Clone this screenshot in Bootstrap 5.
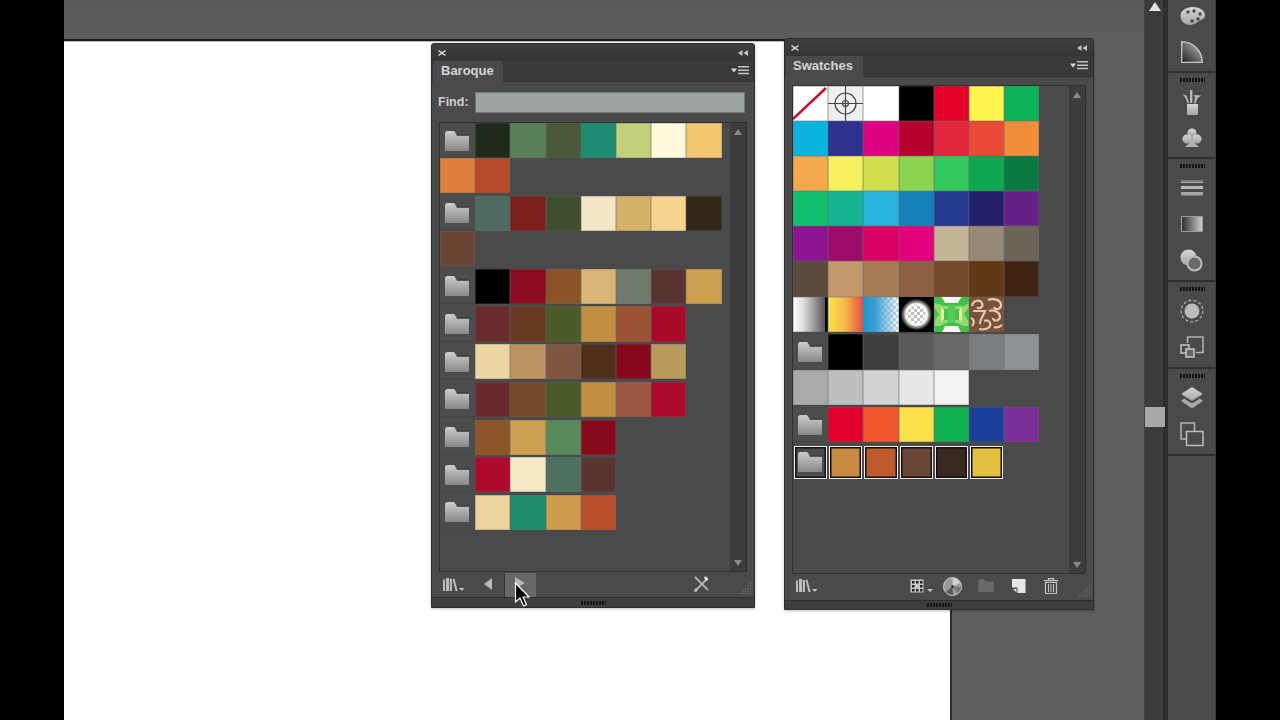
<!DOCTYPE html>
<html lang="en">
<head>
<meta charset="utf-8">
<title>Swatches</title>
<link href="https://cdn.jsdelivr.net/npm/bootstrap@5.3.0/dist/css/bootstrap.min.css" rel="stylesheet">
<style>
html,body{margin:0;height:720px;overflow:hidden;background:#000;font-family:"Liberation Sans",Arial,sans-serif}
.stage{width:1280px;height:720px;background:#000}
.side{width:64px;background:#000}
.work{width:1080px;background:#5e5e5e}
.work-top{height:39px;background:linear-gradient(#5a5a5a,#5e5e5e)}
.canvas-row{height:681px}
.art{width:888px;background:#fff;border-top:2px solid #1c1c1c;border-right:2px solid #2c2c2c;box-shadow:inset 0 1px 0 #bbb}
.vscroll{width:19px;background:#3b3b3b;border-left:1px solid #444}
.vscroll-up{width:0;height:0;border-left:6px solid transparent;border-right:6px solid transparent;border-bottom:9px solid #e4e4e4;margin:2px 0 0 4px}
.vthumb{height:20px;width:20px;background:#a8a8a8;top:407px;left:0}
.vgap{width:5px;background:#2e2e2e}
.dock{width:48px;background:#4a4a4a;border-right:1px solid #3c3c3c}
.dgroup{border-bottom:2px solid #2f2f2f;padding-top:11px}
.dgroup.first{height:73px;padding-top:0}
.dgroup.g2{height:86px}
.dgroup.g3{height:123px}
.dgroup.g4{height:87px}
.grip{height:4px;width:25px;background:repeating-linear-gradient(90deg,#141414 0 2px,transparent 2px 3px)}
.dgroup .grip{position:absolute;top:5px;left:12px}
.dicon{height:36px}
.dicon.shift{margin-top:-2px}
.panel{position:absolute;background:#4a4a4a;border:1px solid #2e2e2e;border-radius:3px 3px 0 0;color:#d2d2d2;box-shadow:0 1px 3px rgba(0,0,0,.25)}
.panel-a{left:431px;top:43px;width:324px;height:565px}
.panel-b{left:784px;top:38px;width:310px;height:572px}
.ptitle{height:17px;background:linear-gradient(#3f3f3f,#353535);padding:0 6px}
.ptabs{height:21px;background:#3a3a3a;border-bottom:1px solid #333}
.ptab{height:21px;background:#4a4a4a;margin-left:1px;font-weight:700;font-size:13px;color:#d4d4d4;line-height:20px}
.panel-a .ptab{width:70px;padding-left:8px}
.panel-b .ptab{width:77px;padding-left:7px}
.menuic{margin-right:5.5px}
.findrow{height:40px;padding:10px 9px 0 6px}
.findlabel{width:37px;font-size:12.5px;font-weight:700;color:#cfcfcf;line-height:20px}
.findbox{flex:1;height:21px;background:#9fa5a0;border:1px solid #777}
.listbox{border:1px solid #2f2f2f;background:#4a4a4a}
.panel-a .listbox{margin:0 7px 0 7px;height:450px}
.panel-b .listbox{margin:7.5px 7px 0 7px;height:489.5px}
.track{width:16px;background:#3d3d3d}
.tri-up,.tri-down{width:0;height:0;border-left:4.5px solid transparent;border-right:4.5px solid transparent}
.tri-up{border-bottom:6px solid #8a8a8a;margin-top:6px}
.tri-down{border-top:6px solid #8a8a8a;margin-bottom:5px}
.swgroup{margin-bottom:2.5px}
.panel-a .swgroup{width:282px}
.panel-b .swgroup{width:247px}
.chip{width:35.2px;height:35.2px;flex:none;box-shadow:inset 0 0 0 .6px rgba(105,105,105,.55)}
.folder{width:35.2px;height:35.2px;flex:none;background:#4c4c4c;border-bottom:1px solid #444;display:flex;align-items:center;justify-content:center;padding:1px 1.5px 0 0}
.picked{margin:0;box-shadow:inset 0 0 0 1px #eee,inset 0 0 0 2.5px #111;border:.7px solid #4a4a4a}
.picked.folder{padding:0 1.5px 0 0}
.pfoot{height:25px}
.panel-b .pfoot{height:26px}
.pfoot .spot{position:absolute}
.hilite{left:72px;top:1px;width:32px;height:24px;background:#676767;border-left:1px solid #333}
.pbase{height:10px;background:#3e3e3e;border-top:1px solid #2e2e2e}
.panel-b .pbase{height:9px}
.grad-metal{background:linear-gradient(90deg,#fff 0,#ddd 30%,#555 92%,#000 93%)}
.grad-fire{background:linear-gradient(90deg,#fbe54a 0,#f7b64a 50%,#e8503c 100%)}
.checks{background-color:#fff;background-image:linear-gradient(45deg,#c9d6de 25%,transparent 25%,transparent 75%,#c9d6de 75%),linear-gradient(45deg,#c9d6de 25%,transparent 25%,transparent 75%,#c9d6de 75%);background-size:6px 6px;background-position:0 0,3px 3px}
.checks.gray{background-image:linear-gradient(45deg,#bbb 25%,transparent 25%,transparent 75%,#bbb 75%),linear-gradient(45deg,#bbb 25%,transparent 25%,transparent 75%,#bbb 75%)}
.fade-blue{position:absolute;inset:0;background:linear-gradient(90deg,#1f96d0 0,#3aa0d4 35%,rgba(80,170,220,0) 100%)}
.halo{position:absolute;inset:0;background:radial-gradient(circle at center,rgba(255,255,255,0) 0,rgba(255,255,255,.15) 32%,rgba(255,255,255,.9) 43%,rgba(120,120,120,.9) 52%,#000 64%)}
.cursor{position:absolute;left:514px;top:582px}
.defs-holder{position:absolute;width:0;height:0}
</style>
</head>
<body>
<svg class="defs-holder" aria-hidden="true"><defs>
<linearGradient id="gf" x1="0" y1="0" x2="0" y2="1"><stop offset="0" stop-color="#cdcdcd"/><stop offset="1" stop-color="#878787"/></linearGradient>
<linearGradient id="gi" x1="0" y1="0" x2="0" y2="1"><stop offset="0" stop-color="#d6d6d6"/><stop offset="1" stop-color="#a4a4a4"/></linearGradient>
<linearGradient id="gs" x1="1" y1="0" x2="0" y2="1"><stop offset="0" stop-color="#c0c0c0"/><stop offset="1" stop-color="#1e1e1e"/></linearGradient>
<linearGradient id="gb" x1="0" y1="0" x2="1" y2="0"><stop offset="0" stop-color="#2c2c2c"/><stop offset="1" stop-color="#d2d2d2"/></linearGradient>
<symbol id="fold" viewBox="0 0 24 20"><path d="M0 2.500Q0 0 2.500 0H9l3 4h12v16H0z" fill="url(#gf)"/><path d="M11 3.400h13v1.400H12z" fill="#333"/></symbol>
<symbol id="lib" viewBox="0 0 22 14"><path d="M0 1.500h2v11.500H0zM3 0h3.200v13H3zM7 1h2v12H7zM9.600 1l1.800-.6L14.700 13h-2.200z" fill="#bdbdbd"/><path d="M16 10h5.500l-2.700 2.800z" fill="#c8c8c8"/></symbol>
<symbol id="menuic" viewBox="0 0 18 10"><path d="M0 2.500h6L3 6.500z" fill="#d8d8d8"/><path d="M7 0h11v1.500H7zM7 3.400h11v1.500H7zM7 6.800h11v1.500H7z" fill="#c4c4c4"/></symbol>
<symbol id="closeic" viewBox="0 0 8 6"><path d="M.8 0 4 2 7.200 0l.8.9L5.200 3 8 5.100l-.8.900L4 4 .8 6 0 5.100 2.800 3 0 .9z" fill="#d4d4d4"/></symbol>
<symbol id="collic" viewBox="0 0 10 6"><path d="M4.500 0v6L0 3zM10 0v6L5.500 3z" fill="#c4c4c4"/></symbol>
<symbol id="dots" viewBox="0 0 12 12"><g fill="#6e6e6e"><rect x="10" y="0" width="1.200" height="1.200"/><rect x="7.500" y="2.500" width="1.200" height="1.200"/><rect x="10" y="2.500" width="1.200" height="1.200"/><rect x="5" y="5" width="1.200" height="1.200"/><rect x="7.500" y="5" width="1.200" height="1.200"/><rect x="10" y="5" width="1.200" height="1.200"/><rect x="2.500" y="7.500" width="1.200" height="1.200"/><rect x="5" y="7.500" width="1.200" height="1.200"/><rect x="7.500" y="7.500" width="1.200" height="1.200"/><rect x="10" y="7.500" width="1.200" height="1.200"/><rect x="0" y="10" width="1.200" height="1.200"/><rect x="2.500" y="10" width="1.200" height="1.200"/><rect x="5" y="10" width="1.200" height="1.200"/><rect x="7.500" y="10" width="1.200" height="1.200"/><rect x="10" y="10" width="1.200" height="1.200"/></g></symbol>
</defs></svg>

<div class="stage d-flex position-relative">
  <div class="side"></div>
  <div class="work d-flex flex-column">
    <div class="work-top"></div>
    <div class="canvas-row d-flex"><div class="art"></div></div>
  </div>
  <div class="vscroll position-relative"><div class="vscroll-up"></div><div class="vthumb position-absolute"></div></div>
  <div class="vgap"></div>
  <div class="dock d-flex flex-column">
    <div class="dgroup first position-relative">
      <div class="dicon shift d-flex align-items-center justify-content-center"><svg width="26" height="18" viewBox="0 0 26 18"><path fill-rule="evenodd" d="M2 6C4 2 9 0 14 0c6 0 12 3 12 8 0 3-2 4-4 5-3 1-6 5-11 5C5 18 0 13 2 6z" fill="url(#gi)"/><g fill="#4a4a4a"><circle cx="9" cy="5" r="1.700"/><circle cx="15" cy="4" r="1.700"/><circle cx="21" cy="7" r="1.700"/><circle cx="19" cy="12" r="1.700"/><circle cx="13" cy="14" r="1.700"/></g></svg></div>
      <div class="dicon d-flex align-items-center justify-content-center"><svg width="22" height="22" viewBox="0 0 22 22"><path d="M.7.7C12 .7 21.300 10 21.300 21.300H.7z" fill="url(#gs)" stroke="#c8c8c8" stroke-width="1.300"/></svg></div>
    </div>
    <div class="dgroup g2 position-relative">
      <div class="grip"></div>
      <div class="dicon d-flex align-items-center justify-content-center"><svg width="20" height="26" viewBox="0 0 20 26"><path d="M5 15h11v11H5z" fill="url(#gi)"/><path d="M8 14V1h2.400v13zM5.600 14.500 3.500 9 .5 5l4 1.500 2.600 7.500zM12 14.500l1-6L11.500 6l8 .5-4 2.500-2 5.500z" fill="#b8b8b8"/></svg></div>
      <div class="dicon d-flex align-items-center justify-content-center"><svg width="20" height="20" viewBox="0 0 20 20"><g fill="url(#gi)"><circle cx="10" cy="5" r="4.600"/><circle cx="5" cy="11" r="4.600"/><circle cx="15" cy="11" r="4.600"/></g><path d="M8.800 9h2.400c0 4 1.500 7 4.300 8.500l1.500 1.500H3l1.500-1.500C7.300 16 8.800 13 8.800 9z" fill="#b0b0b0"/></svg></div>
    </div>
    <div class="dgroup g3 position-relative">
      <div class="grip"></div>
      <div class="dicon d-flex align-items-center justify-content-center"><svg width="22" height="16" viewBox="0 0 22 16"><path d="M0 0h22v1.600H0z" fill="#7a7a7a"/><path d="M0 1.600h22v1.400H0z" fill="#a8a8a8"/><path d="M0 6h22v3H0z" fill="#b8b8b8"/><path d="M0 12h22v3.500H0z" fill="#a6a6a6"/></svg></div>
      <div class="dicon d-flex align-items-center justify-content-center"><svg width="22" height="16" viewBox="0 0 22 16"><rect x=".5" y=".5" width="21" height="15" fill="url(#gb)" stroke="#9a9a9a"/></svg></div>
      <div class="dicon d-flex align-items-center justify-content-center"><svg width="23" height="23" viewBox="0 0 23 23"><circle cx="8.500" cy="8.500" r="8" fill="url(#gi)"/><circle cx="14.500" cy="14.500" r="7" fill="#6a6a6a" stroke="#bdbdbd" stroke-width="2"/></svg></div>
    </div>
    <div class="dgroup g4 position-relative">
      <div class="grip"></div>
      <div class="dicon d-flex align-items-center justify-content-center"><svg width="24" height="24" viewBox="0 0 24 24"><circle cx="12" cy="12" r="7.500" fill="#bcbcbc"/><circle cx="12" cy="12" r="10.800" fill="none" stroke="#a8a8a8" stroke-width="1.300" stroke-dasharray="3.200 2"/></svg></div>
      <div class="dicon d-flex align-items-center justify-content-center"><svg width="24" height="22" viewBox="0 0 24 22"><path d="M7.500 7V1h15.500v15.500H16" fill="none" stroke="#b4b4b4" stroke-width="1.500"/><rect x="1" y="9" width="8" height="8" fill="none" stroke="#c8c8c8" stroke-width="1.500"/><rect x="6" y="13" width="8" height="8" fill="#666" stroke="#c8c8c8" stroke-width="1.500"/></svg></div>
    </div>
    <div class="dgroup g4 position-relative">
      <div class="grip"></div>
      <div class="dicon d-flex align-items-center justify-content-center"><svg width="22" height="22" viewBox="0 0 22 22"><path d="M11 0 22 7 11 14 0 7z" fill="url(#gi)"/><path d="M3 11.500 11 16.500 19 11.500 22 14 11 21.500 0 14z" fill="#a8a8a8"/></svg></div>
      <div class="dicon d-flex align-items-center justify-content-center"><svg width="24" height="25" viewBox="0 0 24 25"><path d="M6 17H1V1h13.500v8" fill="none" stroke="#b4b4b4" stroke-width="1.500"/><rect x="6.500" y="9.500" width="16.500" height="14" fill="none" stroke="#bcbcbc" stroke-width="1.500"/></svg></div>
    </div>
  </div>
  <div class="side flex-grow-1"></div>

  <!-- Baroque panel -->
  <div class="panel panel-a d-flex flex-column">
    <div class="ptitle d-flex align-items-center justify-content-between"><svg width="8" height="6"><use href="#closeic"/></svg><svg width="10" height="6"><use href="#collic"/></svg></div>
    <div class="ptabs d-flex justify-content-between">
      <div class="ptab">Baroque</div>
      <svg class="align-self-center menuic" width="18" height="10"><use href="#menuic"/></svg>
    </div>
    <div class="findrow d-flex align-items-start"><div class="findlabel">Find:</div><div class="findbox"></div></div>
    <div class="listbox d-flex">
      <div class="flex-grow-1 d-flex flex-column">
        <div class="swgroup d-flex flex-wrap">
          <div class="folder"><svg width="24" height="20"><use href="#fold"/></svg></div>
          <div class="chip" style="background:#1f2a1c"></div><div class="chip" style="background:#587f58"></div><div class="chip" style="background:#4a5a38"></div><div class="chip" style="background:#1f8a72"></div><div class="chip" style="background:#c3d07a"></div><div class="chip" style="background:#fdfbdc"></div><div class="chip" style="background:#f5c670"></div><div class="chip" style="background:#df7f3c"></div><div class="chip" style="background:#b84a2c"></div>
        </div>
        <div class="swgroup d-flex flex-wrap">
          <div class="folder"><svg width="24" height="20"><use href="#fold"/></svg></div>
          <div class="chip" style="background:#4f6b60"></div><div class="chip" style="background:#7d1f1c"></div><div class="chip" style="background:#3f4f30"></div><div class="chip" style="background:#f2e6c4"></div><div class="chip" style="background:#d4b26a"></div><div class="chip" style="background:#f4d48e"></div><div class="chip" style="background:#30261a"></div><div class="chip" style="background:#6a4534"></div>
        </div>
        <div class="swgroup d-flex flex-wrap">
          <div class="folder"><svg width="24" height="20"><use href="#fold"/></svg></div>
          <div class="chip" style="background:#000"></div><div class="chip" style="background:#8a0a20"></div><div class="chip" style="background:#8a5428"></div><div class="chip" style="background:#d9b678"></div><div class="chip" style="background:#707a6c"></div><div class="chip" style="background:#5a3430"></div><div class="chip" style="background:#cfa050"></div>
        </div>
        <div class="swgroup d-flex flex-wrap">
          <div class="folder"><svg width="24" height="20"><use href="#fold"/></svg></div>
          <div class="chip" style="background:#6a2a2e"></div><div class="chip" style="background:#653a20"></div><div class="chip" style="background:#4a5a28"></div><div class="chip" style="background:#c09040"></div><div class="chip" style="background:#9a5434"></div><div class="chip" style="background:#a80a28"></div>
        </div>
        <div class="swgroup d-flex flex-wrap">
          <div class="folder"><svg width="24" height="20"><use href="#fold"/></svg></div>
          <div class="chip" style="background:#ebd5a0"></div><div class="chip" style="background:#bc9462"></div><div class="chip" style="background:#7e5640"></div><div class="chip" style="background:#4e2e1a"></div><div class="chip" style="background:#86081c"></div><div class="chip" style="background:#b89a5c"></div>
        </div>
        <div class="swgroup d-flex flex-wrap">
          <div class="folder"><svg width="24" height="20"><use href="#fold"/></svg></div>
          <div class="chip" style="background:#682a2e"></div><div class="chip" style="background:#744a2a"></div><div class="chip" style="background:#4a5a28"></div><div class="chip" style="background:#c29040"></div><div class="chip" style="background:#9a5844"></div><div class="chip" style="background:#ac0a2c"></div>
        </div>
        <div class="swgroup d-flex flex-wrap">
          <div class="folder"><svg width="24" height="20"><use href="#fold"/></svg></div>
          <div class="chip" style="background:#8c5628"></div><div class="chip" style="background:#cfa050"></div><div class="chip" style="background:#588a5a"></div><div class="chip" style="background:#860a1c"></div>
        </div>
        <div class="swgroup d-flex flex-wrap">
          <div class="folder"><svg width="24" height="20"><use href="#fold"/></svg></div>
          <div class="chip" style="background:#ae0a2c"></div><div class="chip" style="background:#f5e8c4"></div><div class="chip" style="background:#4f6f60"></div><div class="chip" style="background:#5a3430"></div>
        </div>
        <div class="swgroup d-flex flex-wrap">
          <div class="folder"><svg width="24" height="20"><use href="#fold"/></svg></div>
          <div class="chip" style="background:#ecd29c"></div><div class="chip" style="background:#1f8a6c"></div><div class="chip" style="background:#cc9c4c"></div><div class="chip" style="background:#b84e2c"></div>
        </div>
      </div>
      <div class="track d-flex flex-column align-items-center justify-content-between"><div class="tri-up"></div><div class="tri-down"></div></div>
    </div>
    <div class="pfoot position-relative">
      <div class="spot hilite"></div>
      <svg class="spot" style="left:11px;top:6px" width="22" height="14"><use href="#lib"/></svg>
      <svg class="spot" style="left:52px;top:6px" width="9" height="12" viewBox="0 0 9 12"><path d="M8 0v12L0 6z" fill="#b8b8b8"/></svg>
      <svg class="spot" style="left:83px;top:5px" width="10" height="12" viewBox="0 0 10 12"><path d="M0 0v12l10-6z" fill="#b8b8b8"/></svg>
      <svg class="spot" style="left:262px;top:4px" width="15" height="16" viewBox="0 0 15 16"><path d="M1 1l13 13M13 3 2 14" stroke="#c4c4c4" stroke-width="1.700" fill="none"/><path d="M10 1.500a2 2 0 1 1 3.500 3l-2 .5z" fill="#dcdcdc"/><path d="M0 16l1-4 3 3z" fill="#c4c4c4"/></svg>
      <svg class="spot" style="left:308px;top:11px" width="12" height="12"><use href="#dots"/></svg>
    </div>
    <div class="pbase d-flex align-items-center justify-content-center"><div class="grip"></div></div>
  </div>

  <!-- Swatches panel -->
  <div class="panel panel-b d-flex flex-column">
    <div class="ptitle d-flex align-items-center justify-content-between"><svg width="8" height="6"><use href="#closeic"/></svg><svg width="10" height="6"><use href="#collic"/></svg></div>
    <div class="ptabs d-flex justify-content-between">
      <div class="ptab">Swatches</div>
      <svg class="align-self-center menuic" width="18" height="10"><use href="#menuic"/></svg>
    </div>
    <div class="listbox d-flex">
      <div class="flex-grow-1 d-flex flex-column">
        <div class="swgroup d-flex flex-wrap">
          <div class="chip bg-white"><svg width="35" height="35" viewBox="0 0 35 35" class="d-block"><path d="M0 33 33 2" stroke="#c8102e" stroke-width="2.500"/></svg></div>
          <div class="chip" style="background:#efefef"><svg width="35" height="35" viewBox="0 0 35 35" class="d-block"><g fill="none" stroke="#444" stroke-width="1.200"><circle cx="17.500" cy="17.500" r="10.500"/><circle cx="17.500" cy="17.500" r="3"/><path d="M0 17.500h35M17.500 0v35"/></g></svg></div>
          <div class="chip" style="background:#fff"></div><div class="chip" style="background:#000"></div><div class="chip" style="background:#e2002a"></div><div class="chip" style="background:#fcf44c"></div><div class="chip" style="background:#0cb358"></div>
          <div class="chip" style="background:#0cb4e0"></div><div class="chip" style="background:#2e3190"></div><div class="chip" style="background:#df0083"></div><div class="chip" style="background:#b8002e"></div><div class="chip" style="background:#e3263c"></div><div class="chip" style="background:#ea4a36"></div><div class="chip" style="background:#f28d3c"></div>
          <div class="chip" style="background:#f6a84e"></div><div class="chip" style="background:#f6f15c"></div><div class="chip" style="background:#d0e04e"></div><div class="chip" style="background:#8cd450"></div><div class="chip" style="background:#33c85c"></div><div class="chip" style="background:#0fa850"></div><div class="chip" style="background:#0a7a40"></div>
          <div class="chip" style="background:#10c06c"></div><div class="chip" style="background:#14b494"></div><div class="chip" style="background:#24b4dc"></div><div class="chip" style="background:#1480b8"></div><div class="chip" style="background:#263a90"></div><div class="chip" style="background:#221e68"></div><div class="chip" style="background:#682088"></div>
          <div class="chip" style="background:#8c1490"></div><div class="chip" style="background:#9c0c68"></div><div class="chip" style="background:#dc0064"></div><div class="chip" style="background:#e4007c"></div><div class="chip" style="background:#c4b498"></div><div class="chip" style="background:#988878"></div><div class="chip" style="background:#6c6456"></div>
          <div class="chip" style="background:#5a4a3c"></div><div class="chip" style="background:#c49a6c"></div><div class="chip" style="background:#a87c54"></div><div class="chip" style="background:#8c6040"></div><div class="chip" style="background:#744a2c"></div><div class="chip" style="background:#603a14"></div><div class="chip" style="background:#402414"></div>
          <div class="chip grad-metal"></div><div class="chip grad-fire"></div>
          <div class="chip checks position-relative"><div class="fade-blue"></div></div>
          <div class="chip checks gray position-relative"><div class="halo"></div></div>
          <div class="chip" style="background:#8fdc6c"><svg width="35" height="35" viewBox="0 0 35 35" class="d-block"><path d="M0 0h6l6 5 11 0 6-5h6v6l-5 3-19 0L0 6z" fill="#3fbf4c"/><path d="M8 0h19l-3 6H11zM8 35h19l-3-6H11z" fill="#f6f9ec"/><path d="M10 12h15v11H10z" fill="#47c24e"/><path d="M14 8h7v19h-7z" fill="#5ac956"/><path d="M0 10l5 7-5 8zM35 10l-5 7 5 8z" fill="#47c24e"/><path d="M7 10l3 3v9l-3 3zM28 10l-3 3v9l3 3z" fill="#e2ee9c"/><path d="M0 29l6 0 6-3 11 0 6 3 6 0v6h-8l-3-6H11l-3 6H0z" fill="#3fbf4c"/></svg></div>
          <div class="chip" style="background:#7a523c"><svg width="35" height="35" viewBox="0 0 35 35" class="d-block"><g fill="none" stroke="#e6c9ae" stroke-width="2.200"><path d="M3 9C4 3 11 2 13 6s-3 7-5 4"/><path d="M19 3c6-2 13 0 13 5s-6 5-7 2"/><path d="M4 14h12c-1 4-5 8-5 13"/><path d="M20 14c6-2 11 2 11 6s-7 5-7 1"/><path d="M2 21c3 1 4 5 1 8"/><path d="M15 24c5-2 7 2 6 5s-7 4-11 3"/><path d="M25 30c3 1 6 0 8-2"/></g></svg></div>
        </div>
        <div class="swgroup d-flex flex-wrap">
          <div class="folder"><svg width="24" height="20"><use href="#fold"/></svg></div>
          <div class="chip" style="background:#000"></div><div class="chip" style="background:#3e3e3e"></div><div class="chip" style="background:#5a5a5a"></div><div class="chip" style="background:#686868"></div><div class="chip" style="background:#7a7e80"></div><div class="chip" style="background:#8e9294"></div>
          <div class="chip" style="background:#a8aaac"></div><div class="chip" style="background:#bcbec0"></div><div class="chip" style="background:#d0d2d3"></div><div class="chip" style="background:#e6e7e8"></div><div class="chip" style="background:#f1f2f2"></div>
        </div>
        <div class="swgroup d-flex flex-wrap">
          <div class="folder"><svg width="24" height="20"><use href="#fold"/></svg></div>
          <div class="chip" style="background:#e4002c"></div><div class="chip" style="background:#f0562c"></div><div class="chip" style="background:#fbe04c"></div><div class="chip" style="background:#10b050"></div><div class="chip" style="background:#1a3f98"></div><div class="chip" style="background:#7a2f98"></div>
        </div>
        <div class="swgroup d-flex flex-wrap">
          <div class="folder picked"><svg width="24" height="20"><use href="#fold"/></svg></div>
          <div class="chip picked" style="background:#c98a42"></div><div class="chip picked" style="background:#bd5a2e"></div><div class="chip picked" style="background:#6a4636"></div><div class="chip picked" style="background:#3a2822"></div><div class="chip picked" style="background:#e4c040"></div>
        </div>
      </div>
      <div class="track d-flex flex-column align-items-center justify-content-between"><div class="tri-up"></div><div class="tri-down"></div></div>
    </div>
    <div class="pfoot position-relative">
      <svg class="spot" style="left:11px;top:5px" width="22" height="14"><use href="#lib"/></svg>
      <svg class="spot" style="left:125px;top:5px" width="24" height="14" viewBox="0 0 24 14"><rect x=".5" y=".5" width="13" height="13" fill="#c8c8c8"/><g fill="#222"><rect x="2" y="2" width="2.500" height="2.500"/><rect x="6" y="2" width="2.500" height="2.500"/><rect x="10" y="2" width="2.500" height="2.500"/><rect x="2" y="6" width="2.500" height="2.500"/><rect x="10" y="6" width="2.500" height="2.500"/><rect x="2" y="10" width="2.500" height="2.500"/><rect x="6" y="10" width="2.500" height="2.500"/><rect x="10" y="10" width="2.500" height="2.500"/></g><path d="M17 10h6l-3 3z" fill="#c8c8c8"/></svg>
      <svg class="spot" style="left:158px;top:3px" width="19" height="19" viewBox="0 0 19 19"><circle cx="9.500" cy="9.500" r="9" fill="#9a9a9a" stroke="#c6c6c6"/><path d="M9.500 9.500 9.500 1A8.500 8.500 0 0 1 17 6z" fill="#d0d0d0"/><path d="M9.500 9.500 3 15a8.500 8.500 0 0 0 7 3z" fill="#5a5a5a"/><path d="M9.500 9.500 18 10a8.500 8.500 0 0 1-3 6z" fill="#747474"/><circle cx="9.500" cy="9.500" r="1.500" fill="#333"/></svg>
      <svg class="spot" style="left:193px;top:5px" width="16" height="13" viewBox="0 0 24 20"><path d="M0 2.500Q0 0 2.500 0H9l3 4h12v16H0z" fill="#696969"/></svg>
      <svg class="spot" style="left:227px;top:5px" width="14" height="14" viewBox="0 0 14 14"><path d="M0 0h13.500v14H5.500V8.500H0z" fill="#e6e6e6"/><path d="M1 10h3.500v3.500z" fill="#e6e6e6"/></svg>
      <svg class="spot" style="left:259px;top:4px" width="14" height="16" viewBox="0 0 14 16"><path d="M4.500 2V.7h5V2M0 2.600h14" stroke="#c4c4c4" fill="none" stroke-width="1.200"/><path d="M1.500 4.500h11V15.500h-11z" fill="none" stroke="#c4c4c4" stroke-width="1.200"/><path d="M4.500 6v8M7 6v8M9.500 6v8" stroke="#c4c4c4"/></svg>
      <svg class="spot" style="left:294px;top:11px" width="12" height="12"><use href="#dots"/></svg>
    </div>
    <div class="pbase d-flex align-items-center justify-content-center"><div class="grip"></div></div>
  </div>

  <svg class="cursor" width="16" height="26" viewBox="0 0 16 26"><path d="M1.500 1v19l4.500-4 3.500 8 3-1.300-3.400-7.700h6z" fill="#000" stroke="#fff" stroke-width="1.200"/></svg>
</div>
<script src="https://cdn.jsdelivr.net/npm/bootstrap@5.3.0/dist/js/bootstrap.bundle.min.js"></script>
</body>
</html>
